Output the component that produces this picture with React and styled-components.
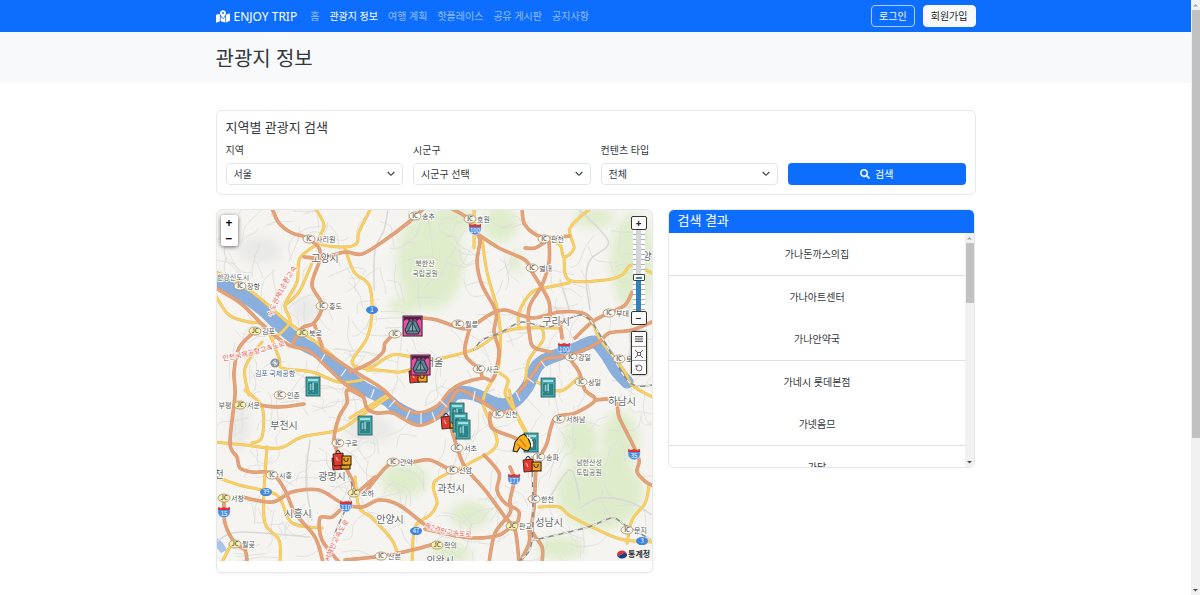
import { useState } from 'react';
import styled, { createGlobalStyle } from 'styled-components';
import { FaSearch } from 'react-icons/fa';
import { FaMapLocationDot } from 'react-icons/fa6';
import { LuRotateCcw } from 'react-icons/lu';

const GlobalStyle = createGlobalStyle`
  * {
    box-sizing: border-box;
  }

  body {
    margin: 0;
    background: #fff;
    color: #32373c;
    font-family: 'Noto Sans', 'Noto Sans CJK KR', sans-serif;
    font-size: 10px;
    line-height: 15px;
  }

  button,
  select,
  input {
    font: inherit;
  }
`;

const Shell = styled.div`
  display: flex;
  height: 100vh;
  overflow: hidden;
`;

const Page = styled.div`
  flex: 1;
  min-width: 0;
`;

const Container = styled.div`
  max-width: 760px;
  margin: 0 auto;
`;

const Navbar = styled.nav`
  background: #0d6efd;
`;

const NavInner = styled(Container)`
  display: flex;
  align-items: center;
  height: 32px;
`;

const Brand = styled.a`
  display: flex;
  align-items: center;
  gap: 4px;
  margin-right: 13px;
  color: #fff;
  font-size: 12px;
  text-decoration: none;

  svg {
    width: 14px;
    height: 13px;
  }
`;

const NavList = styled.ul`
  display: flex;
  flex: 1;
  gap: 10px;
  margin: 0;
  padding: 0;
  list-style: none;
`;

const NavLink = styled.a`
  color: ${({ $active }) => ($active ? '#fff' : 'rgba(255, 255, 255, 0.55)')};
  text-decoration: none;
`;

const AuthButtons = styled.div`
  display: flex;
  gap: 8px;
`;

const AuthButton = styled.button`
  height: 22px;
  padding: 0 7px;
  border: 1px solid ${({ $solid }) => ($solid ? '#f8f9fa' : '#a9cbfe')};
  border-radius: 4px;
  background: ${({ $solid }) => ($solid ? '#f8f9fa' : 'transparent')};
  color: ${({ $solid }) => ($solid ? '#212529' : '#f8f9fa')};
  cursor: pointer;
`;

const PageHeader = styled.header`
  margin-bottom: 27px;
  padding: 15px 0 12px;
  background: #f8f9fa;
`;

const PageTitle = styled.h1`
  margin: 0;
  font-size: 20px;
  font-weight: 400;
  line-height: 24px;
`;

const Card = styled.section`
  overflow: hidden;
  border: 1px solid #e6e8ea;
  border-radius: 6px;
  background: #fff;
`;

const SearchCard = styled(Card)`
  margin-bottom: 14px;
  padding: 9px;
`;

const CardTitle = styled.h2`
  margin: 0 0 8px;
  font-size: 13px;
  font-weight: 400;
  line-height: 15px;
`;

const SearchForm = styled.form`
  display: grid;
  grid-template-columns: repeat(4, 1fr);
  gap: 10px;
  align-items: end;
`;

const Field = styled.label`
  display: flex;
  flex-direction: column;
  gap: 5px;
`;

const SelectBox = styled.div`
  position: relative;

  svg {
    position: absolute;
    top: 7px;
    right: 8px;
    width: 8px;
    height: 8px;
    fill: none;
    stroke: #343a40;
    stroke-width: 1.6;
    pointer-events: none;
  }
`;

const Select = styled.select`
  display: block;
  width: 100%;
  height: 22px;
  padding: 0 22px 0 7px;
  border: 1px solid #e3e6e9;
  border-radius: 4px;
  appearance: none;
  background: #fff;
  color: #32373c;
`;

const SearchButton = styled.button`
  display: flex;
  align-items: center;
  justify-content: center;
  gap: 5px;
  height: 22px;
  border: 0;
  border-radius: 4px;
  background: #0d6efd;
  color: #fff;
  cursor: pointer;
`;

const Columns = styled.div`
  display: grid;
  grid-template-columns: repeat(12, 1fr);
  gap: 15px;
  align-items: start;
`;

const MapCard = styled(Card)`
  grid-column: span 7;
  padding-bottom: 11px;
  box-shadow: 0 1px 3px rgba(0, 0, 0, 0.06);
`;

const MapView = styled.div`
  position: relative;
`;

const MapSvg = styled.svg`
  display: block;
  width: 100%;
  height: auto;
  font-family: 'Noto Sans CJK KR', sans-serif;
`;

const ZoomBox = styled.div`
  position: absolute;
  top: 5px;
  left: 4px;
  display: flex;
  flex-direction: column;
  overflow: hidden;
  border-radius: 3px;
  background: #fff;
  box-shadow: 0 1px 4px rgba(0, 0, 0, 0.6);
`;

const ZoomButton = styled.button`
  width: 17px;
  height: 16px;
  padding: 0;
  border: 0;
  background: #fff;
  color: #000;
  font-size: 12px;
  font-weight: 700;
  line-height: 14px;
  cursor: pointer;

  & + & {
    height: 15px;
    line-height: 12px;
  }
`;

const ToolColumn = styled.div`
  position: absolute;
  top: 6px;
  right: 5px;
  display: flex;
  flex-direction: column;
  align-items: center;
`;

const ToolButton = styled.button`
  display: flex;
  align-items: center;
  justify-content: center;
  width: 16px;
  height: 14px;
  padding: 0;
  border: 1px solid #333;
  border-radius: 2px;
  background: #fff;
  color: #222;
  font-size: 10px;
  font-weight: 700;
  line-height: 12px;
  cursor: pointer;

  svg {
    width: 8px;
    height: 8px;
  }
`;

const ToolGroup = styled.div`
  display: flex;
  flex-direction: column;
  margin-top: 6px;
  border: 1px solid #333;
  border-radius: 2px;
  box-shadow: 0 0 2px rgba(0, 0, 0, 0.5);

  ${ToolButton} {
    width: 14px;
    border: 0;
    border-radius: 0;
  }

  ${ToolButton} + ${ToolButton} {
    border-top: 1px solid #999;
  }
`;

const SliderTrack = styled.div`
  display: flex;
  justify-content: center;
  width: 12px;
  height: 81px;
  background: repeating-linear-gradient(#fff 0 4px, #9db4c4 4px 5px);
`;

const ZoomSlider = styled.input`
  width: 12px;
  height: 81px;
  margin: 0;
  appearance: none;
  direction: rtl;
  writing-mode: vertical-lr;
  background: linear-gradient(#d5d5d5 60%, #3480bd 60%) center / 5px 100% no-repeat;
  cursor: pointer;

  &::-webkit-slider-thumb {
    width: 12px;
    height: 7px;
    border: 1px solid #444;
    border-radius: 1px;
    appearance: none;
    background: linear-gradient(#3480bd, #3480bd) center / 6px 2px no-repeat #fff;
  }
`;

const ResultCard = styled(Card)`
  grid-column: span 5;
`;

const ResultHeader = styled.h2`
  margin: -1px -1px 0;
  padding: 4px 10px 5px;
  background: #0d6efd;
  color: #fff;
  font-size: 13px;
  font-weight: 400;
  line-height: 15px;
`;

const ResultBody = styled.div`
  display: flex;
  max-height: 234px;
`;

const ResultList = styled.ul`
  flex: 1;
  margin: 0;
  padding: 0;
  overflow: hidden;
  list-style: none;
  text-align: center;
`;

const ResultItem = styled.li`
  padding: 14px 10px 13px;

  &:nth-child(odd) {
    border-bottom: 1px solid #dfe2e5;
  }
`;

const ScrollBar = styled.div`
  display: flex;
  flex-direction: column;
  align-items: center;
  flex: none;
  width: 9px;
  background: #f1f1f1;
`;

const ScrollThumb = styled.div`
  flex: 0 0 ${({ $size }) => $size};
  width: 8px;
  background: #c1c1c1;
`;

const ScrollArrow = styled.svg`
  flex: none;
  width: 9px;
  height: 10px;
  margin-top: ${({ $end }) => ($end ? 'auto' : '0')};
  fill: ${({ $end }) => ($end ? '#505050' : '#a3a3a3')};
`;

const NAV_ITEMS = ['홈', '관광지 정보', '여행 계획', '핫플레이스', '공유 게시판', '공지사항'];

const FIELDS = [
  { id: 'sido', label: '지역', options: ['서울', '인천', '경기도'] },
  { id: 'gugun', label: '시군구', options: ['시군구 선택', '강남구', '종로구'] },
  { id: 'content', label: '컨텐츠 타입', options: ['전체', '관광지', '쇼핑', '숙박'] },
];

const RESULTS = [
  '가나돈까스의집',
  '가나아트센터',
  '가나안약국',
  '가네시 롯데본점',
  '가넷옴므',
  '가담',
];

const RIVER = [
  [[210, 278], [239, 293], [262, 309], [282, 328], [303, 344], [322, 354], [342, 371], [362, 387], [387, 400], [397, 408], [420, 418], [440, 411], [455, 394], [473, 394], [497, 404], [513, 402], [527, 387], [537, 366], [549, 358], [575, 349], [594, 342], [606, 354], [616, 370], [627, 382]],
];

const MOTORWAYS = [
  [[272, 208], [279, 223], [292, 233], [305, 237], [319, 248], [319, 262], [312, 285], [322, 305], [314, 323], [302, 328], [292, 345]],
  [[314, 323], [318, 335], [322, 346]],
  [[304, 257], [322, 258], [345, 252], [362, 254], [385, 240], [409, 222], [424, 208]],
  [[214, 287], [239, 302], [255, 317], [269, 331], [289, 345], [309, 351], [329, 369], [345, 384], [362, 395], [367, 408], [377, 413], [393, 413], [417, 425], [437, 418], [450, 402], [460, 390], [483, 402], [498, 412], [511, 410]],
  [[322, 350], [352, 370], [377, 385], [388, 394], [400, 406], [417, 413], [437, 406], [450, 391], [463, 383], [483, 378], [493, 379], [499, 352], [494, 332], [496, 312], [482, 285], [477, 262], [480, 240], [474, 230], [466, 217], [450, 208]],
  [[479, 235], [499, 248], [525, 260], [532, 272], [542, 288], [549, 302], [550, 317]],
  [[549, 242], [549, 262], [542, 285], [529, 308], [530, 338], [535, 348], [552, 352]],
  [[522, 208], [525, 225], [542, 237], [569, 236]],
  [[525, 248], [535, 248], [545, 242]],
  [[423, 318], [437, 320], [457, 327], [469, 328], [489, 315], [505, 310], [532, 318], [559, 312], [582, 313], [592, 320]],
  [[654, 321], [632, 330], [609, 333], [599, 342], [579, 352], [559, 357], [543, 360], [533, 374], [518, 393]],
  [[575, 338], [592, 322], [609, 313], [625, 305], [632, 292]],
  [[395, 333], [385, 343], [383, 352], [370, 363], [350, 372]],
  [[470, 327], [465, 347], [467, 358], [480, 370], [482, 378]],
  [[560, 322], [562, 338]],
  [[572, 362], [579, 372], [585, 390], [595, 400], [575, 413], [555, 418], [547, 443], [542, 453]],
  [[595, 400], [615, 400], [619, 417], [632, 443], [639, 460], [637, 472], [646, 482], [654, 486]],
  [[450, 425], [457, 447], [465, 467], [485, 490], [505, 517], [515, 530], [519, 562]],
  [[484, 455], [499, 473], [497, 490], [505, 503], [519, 512], [515, 530]],
  [[510, 467], [514, 480], [510, 500], [510, 513], [495, 533], [489, 562]],
  [[490, 413], [492, 428], [513, 437], [524, 442]],
  [[536, 465], [534, 507], [532, 530], [542, 547], [542, 562]],
  [[529, 530], [529, 543], [520, 562]],
  [[425, 529], [452, 535], [475, 538], [499, 535], [515, 523]],
  [[367, 490], [390, 464], [413, 462], [430, 460], [452, 470], [467, 470]],
  [[255, 331], [239, 348], [234, 372], [235, 395], [230, 443], [237, 457], [240, 468], [252, 472], [272, 473], [285, 490], [295, 513], [315, 537], [323, 562]],
  [[259, 405], [279, 407], [304, 404]],
  [[242, 497], [272, 502], [292, 492], [319, 490], [342, 503], [362, 507], [379, 500], [399, 505], [425, 525]],
  [[345, 505], [332, 517], [320, 518], [322, 540], [339, 562]],
  [[362, 396], [347, 390], [347, 403], [339, 417], [334, 440], [340, 457], [352, 480], [355, 493], [375, 477]],
  [[224, 498], [225, 523], [235, 543], [245, 550], [247, 562]],
  [[345, 560], [382, 556], [412, 550], [437, 543]],
];

const HIGHWAYS = [
  [[315, 208], [324, 225], [319, 243], [345, 247], [357, 243], [359, 232], [371, 208]],
  [[345, 248], [354, 272], [369, 285], [372, 312], [367, 338], [352, 362], [369, 368], [392, 355], [412, 357]],
  [[319, 243], [300, 258], [297, 282], [285, 305], [290, 322], [275, 338]],
  [[312, 263], [299, 292], [285, 305]],
  [[214, 271], [242, 285], [262, 300], [285, 320], [309, 337], [332, 355]],
  [[214, 293], [229, 315], [249, 322], [265, 326], [279, 358], [282, 368], [312, 372], [339, 382], [362, 380]],
  [[262, 342], [245, 368], [249, 395]],
  [[367, 370], [377, 370], [400, 372], [415, 368]],
  [[427, 360], [447, 357], [477, 348], [500, 333], [523, 328], [560, 328]],
  [[474, 208], [474, 248]],
  [[482, 238], [487, 272], [497, 308], [500, 328], [500, 352], [497, 372], [483, 402], [497, 443], [470, 463], [435, 481], [437, 503], [430, 515], [415, 527], [412, 562]],
  [[591, 208], [570, 228], [574, 248], [564, 257], [560, 245], [549, 240]],
  [[564, 257], [569, 280], [605, 280], [622, 275], [632, 265], [654, 274]],
  [[519, 328], [519, 312], [532, 292], [549, 287], [569, 283]],
  [[542, 328], [543, 340], [529, 360], [525, 385]],
  [[579, 312], [592, 322], [599, 338], [612, 355], [625, 372], [632, 385], [654, 398]],
  [[498, 372], [508, 380], [505, 393], [511, 405], [523, 428], [530, 440]],
  [[390, 396], [359, 417], [339, 430], [302, 437], [279, 448], [245, 445], [214, 442]],
  [[252, 443], [262, 437], [262, 407], [245, 390]],
  [[267, 447], [264, 490], [265, 523], [279, 540], [280, 562]],
  [[214, 476], [239, 485], [262, 490], [279, 497], [292, 523], [322, 528]],
  [[355, 477], [359, 507], [372, 518], [392, 540], [400, 562]],
  [[222, 562], [232, 543]],
  [[539, 507], [559, 507], [572, 517], [605, 533], [625, 540], [654, 542]],
  [[649, 485], [645, 503], [632, 520], [627, 543]],
  [[509, 390], [515, 410], [529, 437]],
  [[537, 382], [560, 391], [578, 378]],
  [[350, 418], [387, 395]],
];

const RAILWAYS = [
  [[474, 350], [482, 340], [500, 333], [522, 322], [549, 327], [582, 315], [602, 338], [629, 382], [654, 385]],
  [[532, 457], [532, 540], [520, 560]],
  [[534, 540], [585, 528], [612, 518], [625, 525], [650, 539]],
  [[349, 477], [352, 493], [335, 533], [328, 560]],
];

const FORESTS = [
  [430, 262, 34, 48],
  [450, 220, 24, 14],
  [500, 224, 18, 18],
  [515, 262, 6, 12],
  [594, 218, 20, 10],
  [632, 262, 22, 48],
  [404, 306, 16, 8],
  [600, 492, 44, 38],
  [580, 440, 18, 22],
  [620, 440, 18, 30],
  [404, 480, 24, 17],
  [470, 515, 20, 14],
  [451, 553, 20, 10],
  [560, 548, 24, 12],
];

const INTERCHANGES = [
  ['송추', 415, 216],
  ['호원', 470, 219],
  ['사리원', 309, 239],
  ['장항', 240, 286],
  ['흥도', 322, 306],
  ['김포', 255, 331, true],
  ['북로', 302, 333, true],
  ['판천', 544, 239],
  ['별내', 532, 268],
  ['월릉', 458, 324],
  ['', 395, 334],
  ['사근', 479, 369],
  ['부대', 609, 313],
  ['강일', 571, 357],
  ['토', 619, 359],
  ['상일', 581, 382],
  ['인춘', 280, 395],
  ['서운', 240, 405, true],
  ['신천', 498, 414],
  ['서하남', 559, 419],
  ['구로', 338, 443],
  ['서초', 457, 448],
  ['송파', 539, 457],
  ['관악', 393, 462],
  ['선암', 452, 470],
  ['시흥', 272, 475],
  ['소하', 354, 493, true],
  ['서창', 224, 498, true],
  ['한천', 534, 499],
  ['판교', 512, 526, true],
  ['문지', 627, 530],
  ['월곶', 235, 544, true],
  ['학의', 437, 545, true],
  ['산본', 381, 556],
];

const CITIES = [
  ['고양시', 325, 262],
  ['서울', 434, 366],
  ['구리시', 556, 325],
  ['하남시', 622, 405],
  ['부천시', 284, 429],
  ['광명시', 332, 480],
  ['과천시', 451, 492],
  ['시흥시', 298, 517],
  ['안양시', 390, 523],
  ['성남시', 549, 526],
  ['의왕시', 440, 564],
  ['천', 219, 478],
  ['양', 647, 260],
];

const SHIELDS = [
  ['100', 475, 229],
  ['100', 564, 348],
  ['110', 346, 506],
  ['15', 224, 512],
  ['171', 514, 479],
  ['35', 634, 454],
];

const ROUTES = [
  ['1', 372, 310],
  ['39', 266, 492],
  ['47', 416, 531],
  ['3', 642, 541],
];

const MARKERS = [
  ['tent', 403, 316],
  ['bags', 409, 367],
  ['tent', 411, 355],
  ['hotel', 306, 377],
  ['hotel', 358, 416],
  ['hotel', 541, 378],
  ['bags', 441, 413],
  ['hotel', 450, 403],
  ['hotel', 453, 413],
  ['hotel', 456, 420],
  ['bags', 332, 454],
  ['bags', 333, 450],
  ['hotel', 524, 433],
  ['sports', 513, 434],
  ['bags', 523, 456],
];

// Catmull-Rom through the given points
const smooth = (points) => {
  let d = `M${points[0]}`;
  for (let i = 0; i < points.length - 1; i += 1) {
    const p0 = points[i - 1] || points[i];
    const p1 = points[i];
    const p2 = points[i + 1];
    const p3 = points[i + 2] || p2;
    const c1 = [p1[0] + (p2[0] - p0[0]) / 6, p1[1] + (p2[1] - p0[1]) / 6];
    const c2 = [p2[0] - (p3[0] - p1[0]) / 6, p2[1] - (p3[1] - p1[1]) / 6];
    d += `C${c1} ${c2} ${p2}`;
  }
  return d;
};

// Local streets: short bent lines, the same ones on every load
const localStreets = () => {
  let seed = 41;
  const next = () => {
    seed = (seed * 1103515245 + 12345) % 2147483648;
    return seed / 2147483648;
  };
  return Array.from({ length: 330 }, () => {
    let x = 217 + next() * 435;
    let y = 210 + next() * 351;
    let angle = next() * 6.28;
    const points = [[x, y]];
    for (let i = 0; i < 3; i += 1) {
      x += Math.cos(angle) * (4 + next() * 13);
      y += Math.sin(angle) * (4 + next() * 13);
      angle += next() * 1.6 - 0.8;
      points.push([x, y]);
    }
    return points;
  });
};

const STREETS = localStreets();

const Lines = ({ lines, ...props }) => (
  <g fill="none" strokeLinecap="round" strokeLinejoin="round" {...props}>
    {lines.map((points, i) => (
      <path key={i} d={smooth(points)} />
    ))}
  </g>
);

const Interchange = ({ name, x, y, junction }) => (
  <g>
    <ellipse
      cx={x}
      cy={y}
      rx="6"
      ry="4"
      fill={junction ? '#f8f0a8' : '#fbf5ec'}
      stroke="#a58a64"
      strokeWidth="0.8"
    />
    <text x={x} y={y + 2} fontSize="6" fontWeight="500" textAnchor="middle" fill="#444">
      {junction ? 'JC' : 'IC'}
    </text>
    {name && (
      <text x={x + 7} y={y + 3} fontSize="7" fill="#555" stroke="#fff" strokeWidth="1.5" paintOrder="stroke">
        {name}
      </text>
    )}
  </g>
);

const Shield = ({ name, x, y }) => (
  <g>
    <path
      d={`M${x - 6} ${y - 3}h12c1 5-1 8-6 9c-5-1-7-4-6-9z`}
      fill="#4f8de0"
      stroke="#fff"
      strokeWidth="0.5"
    />
    <path d={`M${x - 6} ${y - 5}l3 1l3-1l3 1l3-1v3h-12z`} fill="#d8343a" />
    <text x={x} y={y + 4} fontSize="6" textAnchor="middle" fill="#fff">
      {name}
    </text>
  </g>
);

const MapDrawing = () => (
  <MapSvg viewBox="217 210 435 351" role="img" aria-label="지도">
    <defs>
      <filter id="soft" x="-30%" y="-30%" width="160%" height="160%">
        <feGaussianBlur stdDeviation="5" />
      </filter>
      <path id="ring" d="M272 317Q284 284 306 256" />
      <path id="airport" d="M223 361Q258 355 292 343" />
      <path id="west" d="M329 562Q338 536 354 515" />
      <path id="second" d="M424 527Q446 537 478 537" />
      <g id="tent">
        <rect width="19" height="20" fill="#ef4fa0" stroke="#39203a" />
        <path d="M1 1h17v3l-2-1-2 2-2-2-2 2-2-2-2 2-2-2-3 2z" fill="#4a2340" />
        <path d="M6 5h7l4 9-2 4H4l-2-4z" fill="#5d8796" stroke="#20343c" />
        <path d="M9.500 6L5 15h9zM9.500 6v9M3 17l3-3M16 17l-3-3" fill="#7fa7b2" stroke="#20343c" strokeWidth="0.8" />
      </g>
      <g id="hotel">
        <rect width="14" height="19" fill="#43a9ac" stroke="#2b5558" strokeWidth="0.8" />
        <path d="M2 2h10v2H2z" fill="#a6e0df" />
        <path d="M3 6h3v8H3zM9 6v9M11 6v9M2 16h10" fill="#7ccbcb" stroke="#174f57" strokeWidth="0.9" />
        <path d="M7 6v7" stroke="#d3f2ee" />
      </g>
      <g id="bags">
        <path d="M3 5V2q2-3 4 0v3" fill="none" stroke="#301c18" />
        <path d="M0 4l10-1 1 12-10 1z" fill="#e13a2e" stroke="#301210" strokeWidth="0.8" />
        <path d="M9 6h9v9H9z" fill="#eda321" stroke="#2c1a0a" />
        <path d="M11 8v2q2 3 4 0V8" fill="none" stroke="#3c2510" />
        <path d="M3 7l2 4" stroke="#fff" strokeWidth="0.8" />
      </g>
      <g id="sports">
        <path d="M0 17L2 8l5-6 4-2 4 4 3 8-3 5-4-1-4-3-3 5z" fill="#f6b51c" stroke="#20180f" />
        <path d="M7 5l6 8M4 10l5 4" stroke="#ea7a1c" strokeWidth="1.500" />
        <path d="M14 2q6 3 5 11" fill="none" stroke="#fff" strokeWidth="2" />
        <path d="M15 2q6 3 5 11" fill="none" stroke="#c0342c" strokeDasharray="1 2" />
      </g>
    </defs>

    <rect x="217" y="210" width="435" height="351" fill="#f5f4f1" />
    <g fill="#dcebc6" filter="url(#soft)" opacity="0.85">
      {FORESTS.map(([cx, cy, rx, ry]) => (
        <ellipse key={`${cx}-${cy}`} cx={cx} cy={cy} rx={rx} ry={ry} />
      ))}
    </g>
    <g fill="#e9e9e7" filter="url(#soft)">
      <ellipse cx="260" cy="250" rx="22" ry="14" />
      <ellipse cx="240" cy="425" rx="10" ry="25" />
      <ellipse cx="370" cy="430" rx="24" ry="14" />
      <ellipse cx="305" cy="310" rx="14" ry="14" />
    </g>
    <path d="M217 538l6 5 4 7-6 3-4-5z" fill="#a9c6e6" />
    <Lines lines={STREETS} stroke="#dcdcdb" strokeWidth="0.8" />
    <Lines
      lines={[
        [[388, 208], [384, 230], [375, 250], [374, 290]],
        [[577, 208], [600, 230], [608, 245], [590, 260], [586, 280], [590, 310]],
        [[560, 280], [570, 312]],
        [[217, 541], [240, 532], [310, 537]],
        [[580, 508], [600, 498], [630, 502], [652, 515]],
        [[548, 500], [570, 470], [580, 500]],
        [[310, 440], [306, 480], [312, 520]],
      ]}
      stroke="#d8d8d8"
      strokeWidth="1.500"
    />

    <Lines lines={RIVER} stroke="#8aafdc" strokeWidth="13" />
    <Lines lines={HIGHWAYS} stroke="#e6bd55" strokeWidth="3" />
    <Lines lines={HIGHWAYS} stroke="#f8d066" strokeWidth="2.200" />
    <Lines lines={MOTORWAYS} stroke="#d99a6c" strokeWidth="3.600" />
    <Lines lines={MOTORWAYS} stroke="#e3a27a" strokeWidth="2.600" />
    <path
      d="M321 361l4-7M341 376l5-7M371 398l3-9M389 407l6-7M406 419l4-9M421 424v-11M435 421l-3-9M447 407l-7-7M473 401l2-10M520 401l-4-9M534 383l-7-5M541 361l5 7"
      stroke="#eef3f8"
      strokeWidth="1.200"
    />
    <Lines lines={RAILWAYS} stroke="#8a8a8a" strokeWidth="1.500" />
    <Lines lines={RAILWAYS} stroke="#f2f2f2" strokeWidth="1.200" strokeDasharray="5 5" strokeLinecap="butt" />

    <g fontSize="7" fill="#e5594d" stroke="#fff" strokeWidth="1.500" paintOrder="stroke">
      <text>
        <textPath href="#ring">수도권제1순환고속</textPath>
      </text>
      <text>
        <textPath href="#airport">인천국제공항고속도로</textPath>
      </text>
      <text>
        <textPath href="#west">서해안고속도로</textPath>
      </text>
      <text>
        <textPath href="#second">제2경인고속도로</textPath>
      </text>
    </g>

    {INTERCHANGES.map(([name, x, y, junction]) => (
      <Interchange key={`${x}-${y}`} name={name} x={x} y={y} junction={junction} />
    ))}
    {SHIELDS.map(([name, x, y]) => (
      <Shield key={`${x}-${y}`} name={name} x={x} y={y} />
    ))}
    {ROUTES.map(([name, x, y]) => (
      <g key={name}>
        <ellipse cx={x} cy={y} rx="6" ry="4" fill="#3f84dd" />
        <text x={x} y={y + 2} fontSize="6" textAnchor="middle" fill="#fff">
          {name}
        </text>
      </g>
    ))}

    <g textAnchor="middle" stroke="#fff" strokeWidth="1.500" paintOrder="stroke" fill="#666">
      <g fontSize="10">
        {CITIES.map(([name, x, y]) => (
          <text key={name} x={x} y={y}>
            {name}
          </text>
        ))}
      </g>
      <g fontSize="7" fill="#5f6b5a">
        <text x="425" y="266">북한산</text>
        <text x="425" y="276">국립공원</text>
        <text x="589" y="465">남한산성</text>
        <text x="589" y="475">도립공원</text>
      </g>
      <g fontSize="7">
        <text x="233" y="280">한강신도시</text>
        <text x="225" y="408">부평</text>
        <text x="275" y="376" fill="#4f6a90">김포 국제공항</text>
      </g>
    </g>
    <circle cx="275" cy="363" r="4.500" fill="#8b95a5" />
    <path d="M272 363h6M275 360v6M273 361l4 4" stroke="#fff" strokeWidth="0.8" />

    {MARKERS.map(([type, x, y]) => (
      <use key={`${x}-${y}`} href={`#${type}`} x={x} y={y} />
    ))}

    <path d="M617 555a5 4 0 0 1 10-1q-3-2-5 0t-5 1z" fill="#d8323c" />
    <path d="M617 555q3 1 5-1t5 0a5 4 0 0 1-10 1z" fill="#173f7d" />
    <text x="628" y="557" fontSize="8" fontWeight="700" fill="#333">
      통계청
    </text>
  </MapSvg>
);

const MapPanel = () => {
  const [level, setLevel] = useState(4);

  return (
    <MapView>
      <MapDrawing />
      <ZoomBox>
        <ZoomButton aria-label="확대" onClick={() => setLevel(level + 1)}>+</ZoomButton>
        <ZoomButton aria-label="축소" onClick={() => setLevel(level - 1)}>−</ZoomButton>
      </ZoomBox>
      <ToolColumn>
        <ToolButton aria-label="확대">+</ToolButton>
        <SliderTrack>
          <ZoomSlider
            type="range"
            min="0"
            max="10"
            aria-label="지도 레벨"
            value={level}
            onChange={(e) => setLevel(Number(e.target.value))}
          />
        </SliderTrack>
        <ToolButton aria-label="축소">−</ToolButton>
        <ToolGroup>
          <ToolButton aria-label="목록">
            <svg viewBox="0 0 10 10" stroke="#555" strokeWidth="1.500">
              <path d="M0 2h10M0 5h10M0 8h10" />
            </svg>
          </ToolButton>
          <ToolButton aria-label="전체 화면">
            <svg viewBox="0 0 10 10" fill="none" stroke="#333">
              <path d="M3 3h4v4H3zM0 0l3 3M10 0L7 3M0 10l3-3M10 10L7 7" />
            </svg>
          </ToolButton>
          <ToolButton aria-label="초기화">
            <LuRotateCcw />
          </ToolButton>
        </ToolGroup>
      </ToolColumn>
    </MapView>
  );
};

const Scroll = ({ size }) => (
  <ScrollBar aria-hidden="true">
    <ScrollArrow viewBox="0 0 9 10">
      <path d="M2 6.500L4.500 4L7 6.500z" />
    </ScrollArrow>
    <ScrollThumb $size={size} />
    <ScrollArrow viewBox="0 0 9 10" $end>
      <path d="M2 4L4.500 6.500L7 4z" />
    </ScrollArrow>
  </ScrollBar>
);

const App = () => {
  return (
    <Shell>
      <GlobalStyle />
      <Page>
        <Navbar>
          <NavInner>
            <Brand href="#">
              <FaMapLocationDot />
              ENJOY TRIP
            </Brand>
            <NavList>
              {NAV_ITEMS.map((item, i) => (
                <li key={item}>
                  <NavLink href="#" $active={i === 1}>{item}</NavLink>
                </li>
              ))}
            </NavList>
            <AuthButtons>
              <AuthButton>로그인</AuthButton>
              <AuthButton $solid>회원가입</AuthButton>
            </AuthButtons>
          </NavInner>
        </Navbar>

        <PageHeader>
          <Container>
            <PageTitle>관광지 정보</PageTitle>
          </Container>
        </PageHeader>

        <Container as="main">
          <SearchCard>
            <CardTitle>지역별 관광지 검색</CardTitle>
            <SearchForm onSubmit={(e) => e.preventDefault()}>
              {FIELDS.map(({ id, label, options }) => (
                <Field key={id} htmlFor={id}>
                  {label}
                  <SelectBox>
                    <Select id={id}>
                      {options.map((option) => (
                        <option key={option}>{option}</option>
                      ))}
                    </Select>
                    <svg viewBox="0 0 12 12">
                      <path d="M1 3l5 5 5-5" />
                    </svg>
                  </SelectBox>
                </Field>
              ))}
              <SearchButton type="submit">
                <FaSearch />
                검색
              </SearchButton>
            </SearchForm>
          </SearchCard>

          <Columns>
            <MapCard>
              <MapPanel />
            </MapCard>
            <ResultCard>
              <ResultHeader>검색 결과</ResultHeader>
              <ResultBody>
                <ResultList>
                  {RESULTS.map((name) => (
                    <ResultItem key={name}>{name}</ResultItem>
                  ))}
                </ResultList>
                <Scroll size="60px" />
              </ResultBody>
            </ResultCard>
          </Columns>
        </Container>
      </Page>
      <Scroll size="72%" />
    </Shell>
  );
};

export default App;
